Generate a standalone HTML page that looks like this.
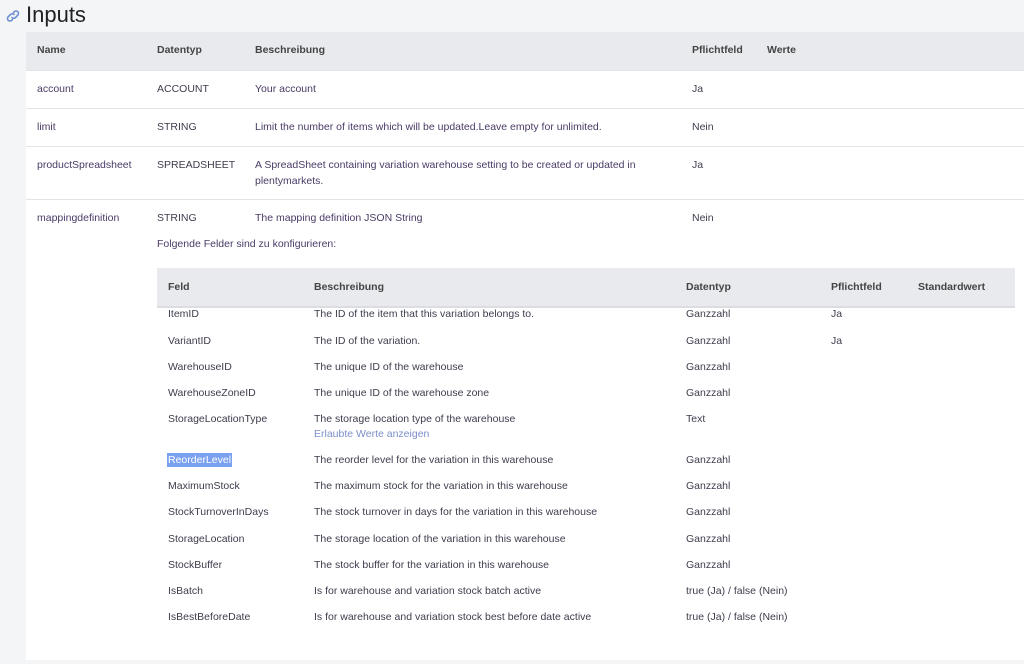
<!DOCTYPE html>
<html><head><meta charset="utf-8"><style>
body{margin:0;width:1024px;height:664px;background:#f4f5f7;font-family:"Liberation Sans",sans-serif;font-size:10.5px;color:#3d3d4d;position:relative;overflow:hidden}
.a{position:absolute;white-space:nowrap;line-height:14px;transform:translateY(-7px)}
.h{font-weight:bold;color:#444}
.card{position:absolute;left:26px;top:32px;width:998px;height:628px;background:#fff}
.bar{position:absolute;background:#e9eaee}
.ln{position:absolute;left:26px;width:998px;height:1px;background:#e3e4e8}
.p{color:#4a3b66}
</style></head><body>
<svg style="position:absolute;left:5px;top:8px" width="16" height="16" viewBox="0 0 16 16" fill="none" stroke="#6f8fd0" stroke-width="1.6" stroke-linecap="round"><path d="M7 9.5a2.5 2.5 0 0 0 3.5 0l2.5-2.5a2.5 2.5 0 0 0-3.5-3.5L8.5 4.5"/><path d="M9 6.5a2.5 2.5 0 0 0-3.5 0L3 9a2.5 2.5 0 0 0 3.5 3.5l1-1"/></svg>
<div class="a" style="left:26px;top:15px;font-size:22px;line-height:26px;transform:translateY(-13px);color:#222">Inputs</div>
<div class="card"></div>
<div class="bar" style="left:26px;top:32px;width:998px;height:38px"></div>
<div class="ln" style="top:108px"></div><div class="ln" style="top:146px"></div><div class="ln" style="top:199px"></div><div class="ln" style="top:70px"></div>
<div class="a h" style="left:37px;top:50px">Name</div><div class="a h" style="left:157px;top:50px">Datentyp</div><div class="a h" style="left:255px;top:50px">Beschreibung</div><div class="a h" style="left:692px;top:50px">Pflichtfeld</div><div class="a h" style="left:767px;top:50px">Werte</div>
<div class="a p" style="left:37px;top:89px">account</div><div class="a" style="left:157px;top:89px">ACCOUNT</div><div class="a p" style="left:255px;top:89px">Your account</div><div class="a" style="left:692px;top:89px">Ja</div>
<div class="a p" style="left:37px;top:127px">limit</div><div class="a" style="left:157px;top:127px">STRING</div><div class="a p" style="left:255px;top:127px">Limit the number of items which will be updated.Leave empty for unlimited.</div><div class="a" style="left:692px;top:127px">Nein</div>
<div class="a p" style="left:37px;top:165px">productSpreadsheet</div><div class="a" style="left:157px;top:165px">SPREADSHEET</div><div class="a p" style="left:255px;top:165px">A SpreadSheet containing variation warehouse setting to be created or updated in</div><div class="a p" style="left:255px;top:181px">plentymarkets.</div><div class="a" style="left:692px;top:165px">Ja</div>
<div class="a p" style="left:37px;top:218px">mappingdefinition</div><div class="a" style="left:157px;top:218px">STRING</div><div class="a p" style="left:255px;top:218px">The mapping definition JSON String</div><div class="a" style="left:692px;top:218px">Nein</div>
<div class="a p" style="left:157px;top:244px">Folgende Felder sind zu konfigurieren:</div>
<div class="bar" style="left:157px;top:268px;width:858px;height:38px;border-bottom:2px solid #dcdde2"></div>
<div class="a h" style="left:168px;top:287px">Feld</div><div class="a h" style="left:314px;top:287px">Beschreibung</div><div class="a h" style="left:686px;top:287px">Datentyp</div><div class="a h" style="left:831px;top:287px">Pflichtfeld</div><div class="a h" style="left:918px;top:287px">Standardwert</div>
<div class="a" style="left:168px;top:314px">ItemID</div><div class="a" style="left:314px;top:314px">The ID of the item that this variation belongs to.</div><div class="a" style="left:686px;top:314px">Ganzzahl</div><div class="a" style="left:831px;top:314px">Ja</div>
<div class="a" style="left:168px;top:341px">VariantID</div><div class="a" style="left:314px;top:341px">The ID of the variation.</div><div class="a" style="left:686px;top:341px">Ganzzahl</div><div class="a" style="left:831px;top:341px">Ja</div>
<div class="a" style="left:168px;top:367px">WarehouseID</div><div class="a" style="left:314px;top:367px">The unique ID of the warehouse</div><div class="a" style="left:686px;top:367px">Ganzzahl</div>
<div class="a" style="left:168px;top:393px">WarehouseZoneID</div><div class="a" style="left:314px;top:393px">The unique ID of the warehouse zone</div><div class="a" style="left:686px;top:393px">Ganzzahl</div>
<div class="a" style="left:168px;top:419px">StorageLocationType</div><div class="a" style="left:314px;top:419px">The storage location type of the warehouse</div><div class="a" style="left:314px;top:434px;color:#7b8fc8">Erlaubte Werte anzeigen</div><div class="a" style="left:686px;top:419px">Text</div>
<div class="a" style="left:167px;top:460px;background:#7aa0f0;color:#fff;padding:0 1px">ReorderLevel</div><div class="a" style="left:314px;top:460px">The reorder level for the variation in this warehouse</div><div class="a" style="left:686px;top:460px">Ganzzahl</div>
<div class="a" style="left:168px;top:486px">MaximumStock</div><div class="a" style="left:314px;top:486px">The maximum stock for the variation in this warehouse</div><div class="a" style="left:686px;top:486px">Ganzzahl</div>
<div class="a" style="left:168px;top:512px">StockTurnoverInDays</div><div class="a" style="left:314px;top:512px">The stock turnover in days for the variation in this warehouse</div><div class="a" style="left:686px;top:512px">Ganzzahl</div>
<div class="a" style="left:168px;top:539px">StorageLocation</div><div class="a" style="left:314px;top:539px">The storage location of the variation in this warehouse</div><div class="a" style="left:686px;top:539px">Ganzzahl</div>
<div class="a" style="left:168px;top:565px">StockBuffer</div><div class="a" style="left:314px;top:565px">The stock buffer for the variation in this warehouse</div><div class="a" style="left:686px;top:565px">Ganzzahl</div>
<div class="a" style="left:168px;top:591px">IsBatch</div><div class="a" style="left:314px;top:591px">Is for warehouse and variation stock batch active</div><div class="a" style="left:686px;top:591px">true (Ja) / false (Nein)</div>
<div class="a" style="left:168px;top:617px">IsBestBeforeDate</div><div class="a" style="left:314px;top:617px">Is for warehouse and variation stock best before date active</div><div class="a" style="left:686px;top:617px">true (Ja) / false (Nein)</div>
</body></html>
